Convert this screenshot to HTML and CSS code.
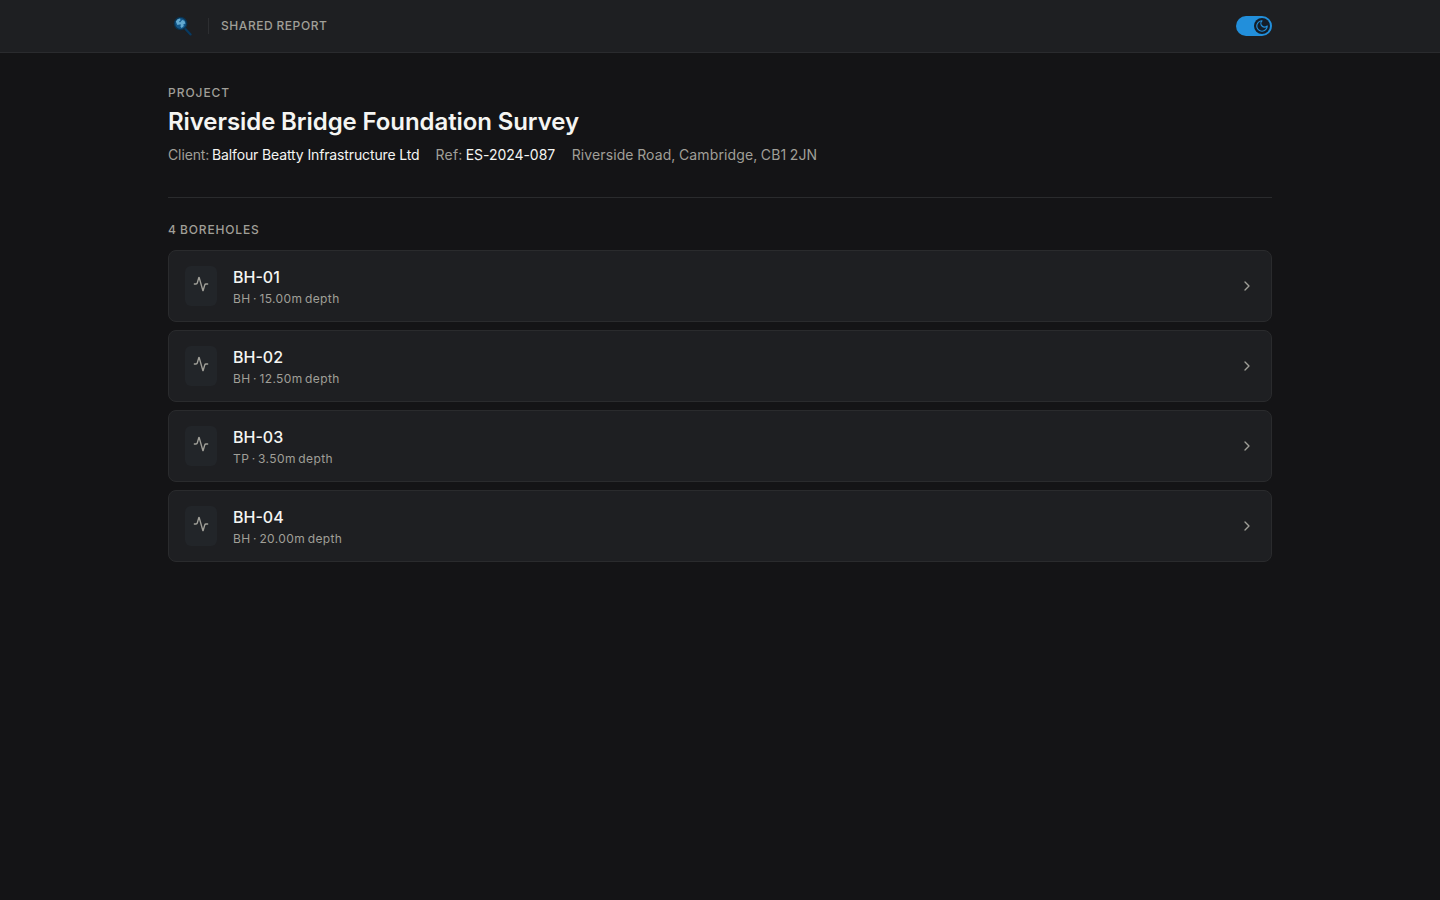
FILE: index.html
```
<!DOCTYPE html>
<html lang="en">
<head>
  <meta charset="UTF-8" />
  <meta name="viewport" content="width=device-width, initial-scale=1.0">
  <title>Riverside Bridge Foundation Survey</title>
  <link rel="stylesheet" href="styles.css">
</head>
<body>

  <header class="topbar">
    <div class="container topbar-inner">
      <div class="brand">
        <svg class="logo" width="28" height="28" viewBox="0 0 28 28">
          <path d="M17 16.6 L22.6 22.4" stroke="#073a62" stroke-width="2.2" stroke-linecap="round" />
          <circle cx="12.6" cy="11.5" r="6.8" fill="#0b3350" />
          <circle cx="12.6" cy="11.5" r="5.4" fill="#13578a" />
          <path d="M7.8 9.6 L9.6 7.2 L12 6.6 L12.6 8.2 L11 9.4 L12 10.4 L14.2 8 L16.4 8.8 L17.4 11.4 L15.4 12.2 L15.8 14 L13.6 16 L12.4 14.4 L13 12.6 L11.2 12.4 L9.4 13 Z" fill="#62a9d0" />
        </svg>
        <span class="divider"></span>
        <span class="label header-label">Shared report</span>
      </div>
      <button class="theme-toggle" aria-label="Toggle theme">
        <span class="thumb">
          <svg class="icon" width="14" height="14" viewBox="0 0 24 24">
            <path d="M12 3a6 6 0 0 0 9 9 9 9 0 1 1-9-9Z" />
          </svg>
        </span>
      </button>
    </div>
  </header>

  <main class="container">
    <!-- Project details -->
    <section class="project">
      <p class="label">Project</p>
      <h1>Riverside Bridge Foundation Survey</h1>
      <div class="meta">
        <span class="client">Client: <strong>Balfour Beatty Infrastructure Ltd</strong></span>
        <span class="ref">Ref: <strong>ES-2024-087</strong></span>
        <span class="address">Riverside Road, Cambridge, CB1 2JN</span>
      </div>
    </section>

    <!-- Borehole list -->
    <section class="boreholes">
      <p class="label count">4 boreholes</p>
      <div class="list">
        <a class="card">
          <span class="card-icon"><svg class="icon" width="16" height="16" viewBox="0 0 24 24"><path d="M22 12h-2.48a2 2 0 0 0-1.93 1.46l-2.35 8.36a.25.25 0 0 1-.48 0L9.24 2.18a.25.25 0 0 0-.48 0l-2.35 8.36A2 2 0 0 1 4.49 12H2" /></svg></span>
          <span class="card-text">
            <span class="name">BH-01</span>
            <span class="depth">BH · 15.00m depth</span>
          </span>
          <svg class="icon chevron" width="16" height="16" viewBox="0 0 24 24"><path d="m9 18 6-6-6-6" /></svg>
        </a>
        <a class="card">
          <span class="card-icon"><svg class="icon" width="16" height="16" viewBox="0 0 24 24"><path d="M22 12h-2.48a2 2 0 0 0-1.93 1.46l-2.35 8.36a.25.25 0 0 1-.48 0L9.24 2.18a.25.25 0 0 0-.48 0l-2.35 8.36A2 2 0 0 1 4.49 12H2" /></svg></span>
          <span class="card-text">
            <span class="name">BH-02</span>
            <span class="depth">BH · 12.50m depth</span>
          </span>
          <svg class="icon chevron" width="16" height="16" viewBox="0 0 24 24"><path d="m9 18 6-6-6-6" /></svg>
        </a>
        <a class="card">
          <span class="card-icon"><svg class="icon" width="16" height="16" viewBox="0 0 24 24"><path d="M22 12h-2.48a2 2 0 0 0-1.93 1.46l-2.35 8.36a.25.25 0 0 1-.48 0L9.24 2.18a.25.25 0 0 0-.48 0l-2.35 8.36A2 2 0 0 1 4.49 12H2" /></svg></span>
          <span class="card-text">
            <span class="name">BH-03</span>
            <span class="depth">TP · 3.50m depth</span>
          </span>
          <svg class="icon chevron" width="16" height="16" viewBox="0 0 24 24"><path d="m9 18 6-6-6-6" /></svg>
        </a>
        <a class="card">
          <span class="card-icon"><svg class="icon" width="16" height="16" viewBox="0 0 24 24"><path d="M22 12h-2.48a2 2 0 0 0-1.93 1.46l-2.35 8.36a.25.25 0 0 1-.48 0L9.24 2.18a.25.25 0 0 0-.48 0l-2.35 8.36A2 2 0 0 1 4.49 12H2" /></svg></span>
          <span class="card-text">
            <span class="name">BH-04</span>
            <span class="depth">BH · 20.00m depth</span>
          </span>
          <svg class="icon chevron" width="16" height="16" viewBox="0 0 24 24"><path d="m9 18 6-6-6-6" /></svg>
        </a>
      </div>
    </section>
  </main>

</body>
</html>
```

FILE: styles.css
```
* {
  box-sizing: border-box;
}

body {
  margin: 0;
  min-height: 100vh;
  background: #141416;
  color: #f5f5f2;
  font-family: Inter, "Liberation Sans", sans-serif;
  font-size: 14px;
  line-height: 20px;
}

.container {
  width: 1104px;
  margin: 0 auto;
}

.topbar {
  background: #1e1f22;
  border-bottom: 1px solid #2a2b2e;
}

.topbar-inner {
  display: flex;
  align-items: center;
  justify-content: space-between;
  height: 52px;
}

.brand {
  display: flex;
  align-items: center;
  gap: 12px;
}

.logo {
  display: block;
}

.divider {
  width: 1px;
  height: 16px;
  background: #2d2e31;
}

.label {
  margin: 0;
  font-size: 12px;
  line-height: 16px;
  font-weight: 500;
  letter-spacing: 0.96px;
  text-transform: uppercase;
  color: #a09f98;
}

.header-label {
  letter-spacing: 0.56px;
  word-spacing: -0.5px;
}

.icon {
  display: block;
  flex-shrink: 0;
  fill: none;
  stroke: currentColor;
  stroke-width: 2;
  stroke-linecap: round;
  stroke-linejoin: round;
}

.theme-toggle {
  display: flex;
  align-items: center;
  justify-content: flex-end;
  width: 36px;
  height: 20px;
  padding: 2px;
  border: none;
  border-radius: 10px;
  background: #228fdb;
}

.thumb {
  display: flex;
  align-items: center;
  justify-content: center;
  width: 16px;
  height: 16px;
  padding-right: 1px;
  border-radius: 50%;
  background: #141d28;
  color: #228fdb;
}

.project {
  padding: 32px 0;
  border-bottom: 1px solid #2a2b2d;
}

h1 {
  margin: 5px 0 7px;
  font-size: 24px;
  line-height: 32px;
  font-weight: 600;
  letter-spacing: -0.07px;
  word-spacing: -0.2px;
}

.meta {
  display: flex;
  gap: 16px;
  color: #a09f98;
  word-spacing: -1px;
}

.meta strong {
  font-weight: 400;
  color: #f5f5f2;
}

.client {
  letter-spacing: -0.12px;
}

.client strong {
  letter-spacing: -0.13px;
  word-spacing: 0;
}

.ref {
  letter-spacing: 0.2px;
}

.ref strong {
  letter-spacing: -0.04px;
}

.address {
  margin-left: 0.5px;
  letter-spacing: 0.11px;
  word-spacing: -0.5px;
}

.boreholes {
  padding-top: 24px;
}

.count {
  letter-spacing: 0.84px;
  word-spacing: -0.7px;
}

.list {
  display: flex;
  flex-direction: column;
  gap: 8px;
  margin-top: 12px;
}

.card {
  display: flex;
  align-items: center;
  gap: 16px;
  height: 72px;
  padding: 0 16px;
  background: #1e1f22;
  border: 1px solid #2a2b2d;
  border-radius: 8px;
}

.card-icon {
  width: 32px;
  height: 40px;
  padding: 10px 8px;
  border-radius: 6px;
  background: #222529;
  color: #a09f98;
}

.card-text {
  display: flex;
  flex: 1;
  flex-direction: column;
  gap: 2px;
}

.name {
  font-size: 16px;
  line-height: 24px;
  font-weight: 500;
}

.depth {
  font-size: 12px;
  line-height: 16px;
  letter-spacing: 0.4px;
  word-spacing: -1.3px;
  color: #a09f98;
}

.chevron {
  color: #a09f98;
}
```
